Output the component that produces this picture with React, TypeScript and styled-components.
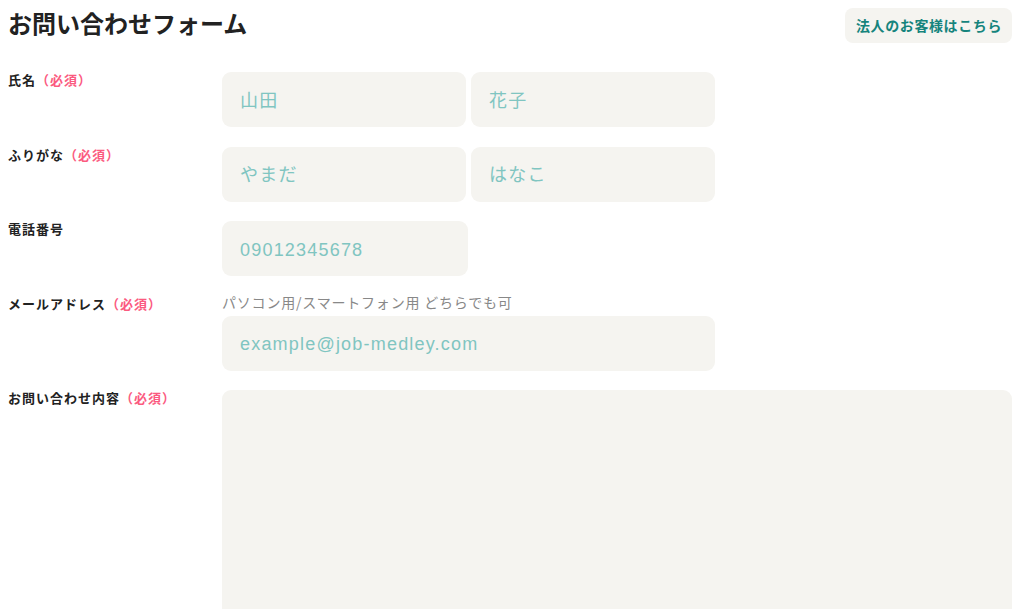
import styled, { createGlobalStyle } from 'styled-components';

const colors = {
  text: '#222222',
  required: '#fb5a7f',
  field: '#f5f4f0',
  placeholder: '#80c5c1',
  teal: '#16847d',
  hint: '#888888',
};

const GlobalStyle = createGlobalStyle`
  * {
    box-sizing: border-box;
  }

  body {
    background: #ffffff;
    color: ${colors.text};
    font-family: 'Noto Sans CJK JP', 'Liberation Sans', sans-serif;
    margin: 0;
  }
`;

interface FieldProps {
  wide?: boolean
}

const fields = {
  name: [
    { placeholder: '山田' },
    { placeholder: '花子' },
  ],
  kana: [
    { placeholder: 'やまだ' },
    { placeholder: 'はなこ' },
  ],
};

export default function App() {
  return (
    <Page>
      <GlobalStyle />
      <Header>
        <Title>お問い合わせフォーム</Title>
        <CorporateLink href="#">法人のお客様はこちら</CorporateLink>
      </Header>
      <Form>
        <Row>
          <Label>
            氏名<Required>（必須）</Required>
          </Label>
          <Pair>
            {fields.name.map(f => (
              <Input key={f.placeholder} placeholder={f.placeholder} />
            ))}
          </Pair>
        </Row>
        <Row>
          <Label>
            ふりがな<Required>（必須）</Required>
          </Label>
          <Pair>
            {fields.kana.map(f => (
              <Input key={f.placeholder} placeholder={f.placeholder} />
            ))}
          </Pair>
        </Row>
        <Row>
          <Label>電話番号</Label>
          <Field>
            <PhoneInput type="tel" placeholder="09012345678" />
          </Field>
        </Row>
        <Row>
          <Label>
            メールアドレス<Required>（必須）</Required>
          </Label>
          <Field>
            <Hint>パソコン用/スマートフォン用 どちらでも可</Hint>
            <Input wide type="email" placeholder="example@job-medley.com" />
          </Field>
        </Row>
        <Row>
          <Label>
            お問い合わせ内容<Required>（必須）</Required>
          </Label>
          <Field>
            <TextArea />
          </Field>
        </Row>
      </Form>
    </Page>
  );
}

const Page = styled.div`
  padding: 0 12px 40px 8px;
`;

const Header = styled.header`
  align-items: flex-start;
  display: flex;
  height: 43px;
  justify-content: space-between;
  padding-top: 5px;
`;

const Title = styled.h1`
  color: ${colors.text};
  font-size: 24px;
  font-weight: 700;
  line-height: 36px;
  margin: 0;
`;

const CorporateLink = styled.a`
  background-color: ${colors.field};
  border-radius: 8px;
  color: ${colors.teal};
  font-size: 14px;
  font-weight: 700;
  letter-spacing: 0.6px;
  line-height: 19px;
  margin-top: 3px;
  padding: 8px 10px 8px 11px;
  text-decoration: none;
`;

const Form = styled.form`
  display: flex;
  flex-direction: column;
  gap: 19.5px;
  margin-top: 29px;
`;

const Row = styled.div`
  align-items: start;
  display: grid;
  grid-template-columns: 214px 1fr;
`;

const Label = styled.label`
  color: ${colors.text};
  font-size: 13px;
  font-weight: 700;
  letter-spacing: 1px;
  line-height: 16px;
`;

const Required = styled.span`
  color: ${colors.required};
`;

const Field = styled.div`
  display: flex;
  flex-direction: column;
`;

const Pair = styled.div`
  display: grid;
  gap: 5px;
  grid-template-columns: 244px 244px;
`;

const Hint = styled.p`
  color: ${colors.hint};
  font-size: 14px;
  letter-spacing: 0.8px;
  line-height: 20px;
  margin: -4px 0 4px;
`;

const Input = styled.input<FieldProps>`
  background-color: ${colors.field};
  border: none;
  border-radius: 9px;
  color: ${colors.text};
  font-family: 'Liberation Sans', 'Noto Sans CJK JP', sans-serif;
  font-size: 18px;
  height: 55px;
  letter-spacing: 1.2px;
  outline: none;
  padding: 3px 18px 0;
  width: ${({ wide }) => (wide ? '493px' : '100%')};

  &::placeholder {
    color: ${colors.placeholder};
  }
`;

const PhoneInput = styled(Input)`
  width: 246px;
`;

const TextArea = styled.textarea`
  background-color: ${colors.field};
  border: none;
  border-radius: 9px;
  display: block;
  font-family: 'Liberation Sans', 'Noto Sans CJK JP', sans-serif;
  font-size: 18px;
  height: 240px;
  outline: none;
  padding: 16px 18px;
  resize: none;
  width: 100%;
`;
